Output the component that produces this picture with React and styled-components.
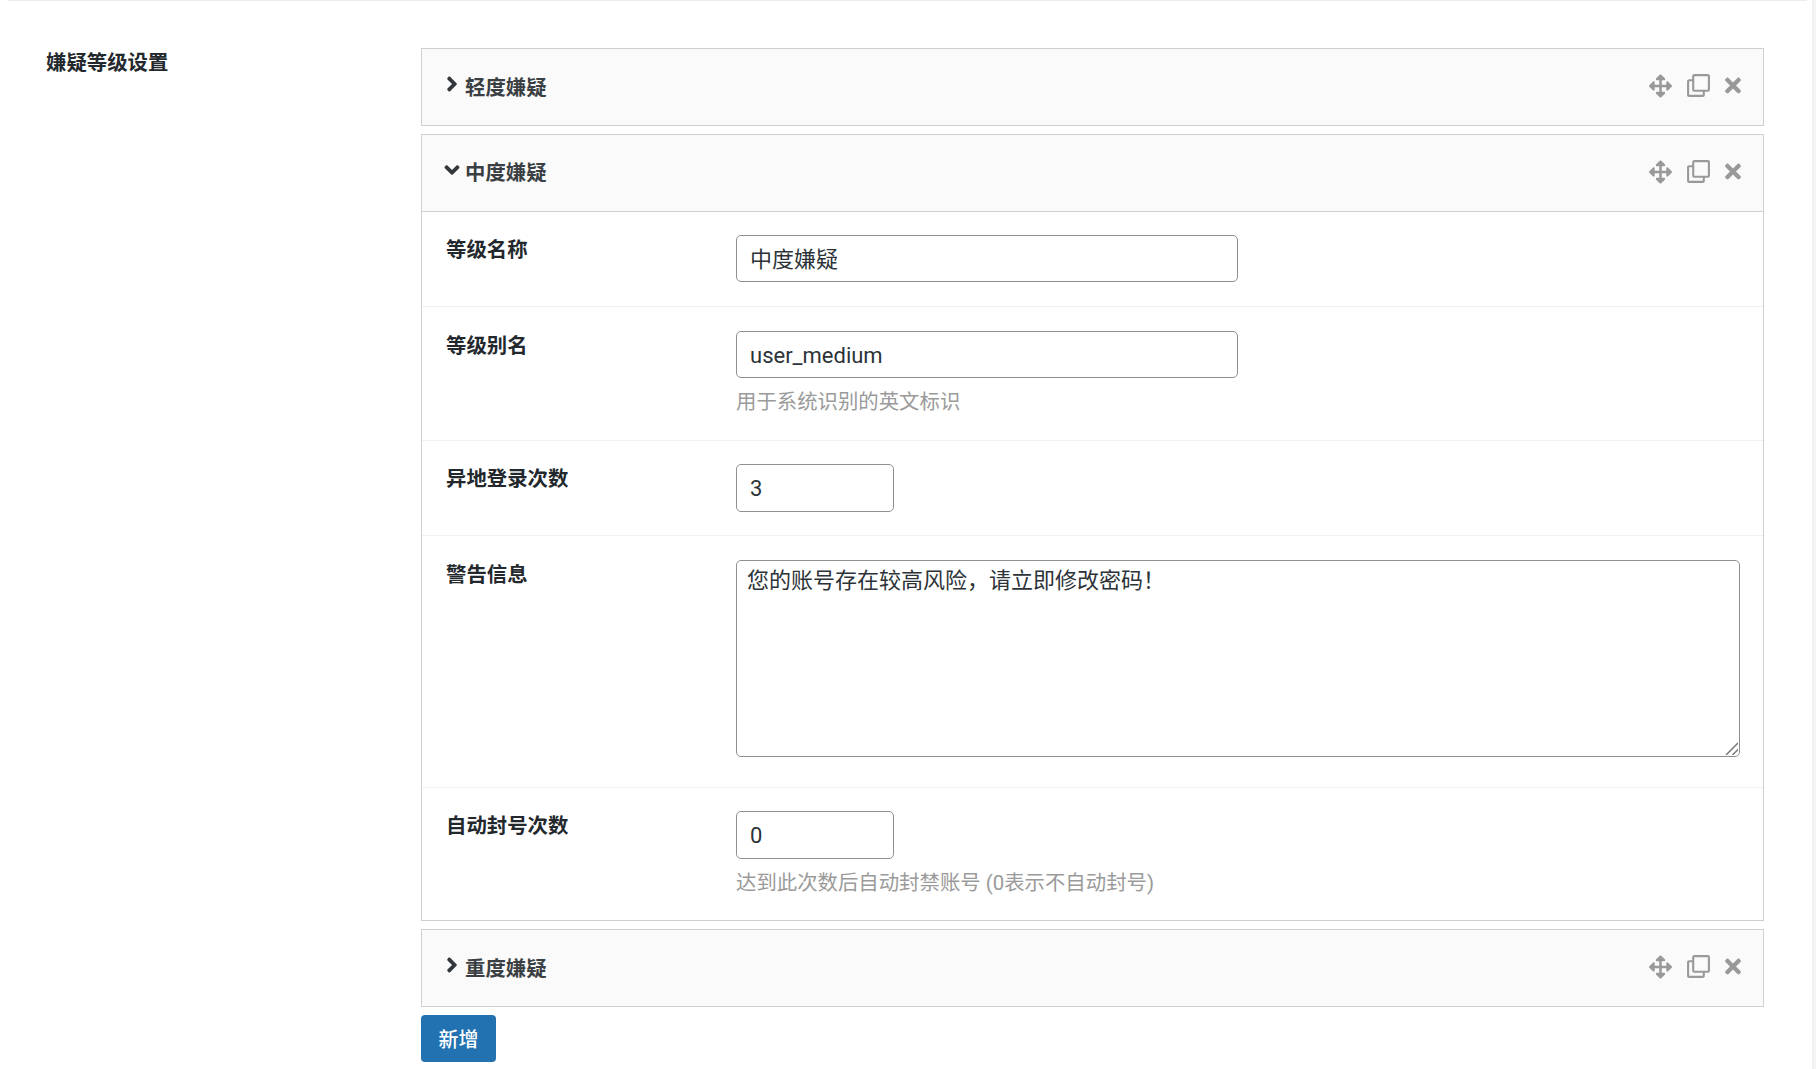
import React from "react";
import styled, { createGlobalStyle } from "styled-components";
import { FaArrowsAlt, FaTimes, FaAngleRight, FaAngleDown } from "react-icons/fa";

const Global = createGlobalStyle`
  html, body { margin: 0; padding: 0; background: #fff; }
  body { font-family: Roboto, "Noto Sans CJK SC", sans-serif; color: #23282d; }
  * { box-sizing: border-box; }
`;

const Shell = styled.div`
  display: flex;
  width: 1816px;
  height: 1069px;
  overflow: hidden;
`;
const Main = styled.main`
  width: 1812px;
  display: flex;
  flex-direction: column;
`;
const Gutter = styled.div`
  width: 4px;
  background: linear-gradient(90deg, #efefef, #f6f6f6);
`;
const TopLine = styled.div`
  height: 1px;
  margin: 0 5px 0 8px;
  background: #ececec;
`;
const Section = styled.section`
  display: flex;
  padding: 47px 0 0 46px;
`;
const SectionTitle = styled.h2`
  width: 375px;
  margin: 0;
  padding-top: 1px;
  font-size: 20.4px;
  line-height: 28px;
  font-weight: 700;
  color: #23282d;
`;
const Stack = styled.div`
  width: 1343px;
  display: flex;
  flex-direction: column;
  gap: 8px;
`;
const Panel = styled.div`
  border: 1px solid #cfcfcf;
  background: #fff;
`;
const PanelHead = styled.div`
  height: ${(p) => (p.$open ? "77px" : "76px")};
  padding: 0 21px 0 24px;
  display: flex;
  align-items: center;
  background: #fafafa;
  border-bottom: ${(p) => (p.$open ? "1px solid #cfcfcf" : "none")};
`;
const Caret = styled.span`
  width: 25px;
  height: 24px;
  margin-top: -6px;
  margin-left: -6px;
  display: flex;
  align-items: center;
  justify-content: flex-start;
  color: #32373c;
  font-size: 24px;
`;
const PanelTitle = styled.span`
  flex: 1;
  margin-top: ${(p) => (p.$open ? "0" : "2px")};
  font-size: 20.4px;
  line-height: 28px;
  font-weight: 700;
  color: #3a3f44;
`;
const Tools = styled.div`
  display: flex;
  align-items: center;
  color: #999;
  margin-top: -3px;
`;
const ToolSlot = styled.span`
  display: flex;
  align-items: center;
  justify-content: center;
  width: ${(p) => p.$w}px;
  margin-left: ${(p) => p.$gap}px;
  font-size: ${(p) => p.$size}px;
`;
const Row = styled.div`
  display: flex;
  padding: ${(p) => p.$top}px 20px ${(p) => p.$bottom}px 24px;
  border-bottom: ${(p) => (p.$last ? "none" : "1px solid #f0f0f0")};
`;
const RowLabel = styled.label`
  width: 290px;
  flex: none;
  padding-top: 1px;
  font-size: 20.4px;
  line-height: 28px;
  font-weight: 700;
  color: #23282d;
`;
const RowBody = styled.div`
  flex: 1;
  min-width: 0;
  display: flex;
  flex-direction: column;
  align-items: flex-start;
`;
const Input = styled.input`
  display: block;
  width: ${(p) => p.$w}px;
  height: ${(p) => p.$h}px;
  padding: ${(p) => (p.$latin ? "1px 13px 0" : "0 13px 3px")};
  border: 1px solid #8c8f94;
  border-radius: 5px;
  background: #fff;
  color: #2c3338;
  font-family: Roboto, "Noto Sans CJK SC", sans-serif;
  font-size: 22px;
  outline: none;
`;
const AreaWrap = styled.div`
  position: relative;
  width: 1004px;
  height: 197px;
`;
const TextArea = styled.textarea`
  display: block;
  width: 100%;
  height: 100%;
  padding: 2px 10px;
  border: 1px solid #8c8f94;
  border-radius: 5px;
  background: #fff;
  color: #2c3338;
  font-family: "Noto Sans CJK SC", Roboto, sans-serif;
  font-size: 22px;
  line-height: 30px;
  resize: none;
  outline: none;
`;
const ResizeGrip = styled.svg`
  position: absolute;
  right: 2px;
  bottom: 2px;
  width: 13px;
  height: 13px;
  stroke: #777;
  stroke-width: 1.5;
`;
const Hint = styled.p`
  margin: 10px 0 0;
  font-size: 20.4px;
  line-height: 28px;
  color: #9a9a9a;
`;
const AddButton = styled.button`
  display: block;
  width: 75px;
  height: 47px;
  border: none;
  border-radius: 4px;
  background: #2271b1;
  color: #fff;
  font-family: "Noto Sans CJK SC", sans-serif;
  font-size: 20px;
  font-weight: 500;
`;

const CopyIcon = () => (
  <svg width="23" height="23" viewBox="0 0 23 23" fill="none" stroke="currentColor" strokeWidth="2.1">
    <rect x="6.2" y="1.1" width="15.7" height="15.7" rx="1" />
    <path d="M6.2 6.2H2.1a1 1 0 0 0-1 1v13.7a1 1 0 0 0 1 1h13.7a1 1 0 0 0 1-1v-4.1" />
  </svg>
);

const Head = ({ title, open }) => (
  <PanelHead $open={open}>
    <Caret>{open ? <FaAngleDown /> : <FaAngleRight />}</Caret>
    <PanelTitle $open={open}>{title}</PanelTitle>
    <Tools>
      <ToolSlot $w={23} $gap={0} $size={24}><FaArrowsAlt /></ToolSlot>
      <ToolSlot $w={23} $gap={15} $size={23}><CopyIcon /></ToolSlot>
      <ToolSlot $w={18} $gap={14} $size={23}><FaTimes /></ToolSlot>
    </Tools>
  </PanelHead>
);

export default function App() {
  return (
    <Shell>
      <Global />
      <Main>
        <TopLine />
        <Section>
          <SectionTitle>嫌疑等级设置</SectionTitle>
          <Stack>
            <Panel>
              <Head title="轻度嫌疑" />
            </Panel>
            <Panel>
              <Head title="中度嫌疑" open />
              <Row $top={23} $bottom={24}>
                <RowLabel>等级名称</RowLabel>
                <RowBody>
                  <Input $w={502} $h={47} readOnly value="中度嫌疑" />
                </RowBody>
              </Row>
              <Row $top={24} $bottom={24}>
                <RowLabel>等级别名</RowLabel>
                <RowBody>
                  <Input $w={502} $h={47} $latin readOnly value="user_medium" />
                  <Hint>用于系统识别的英文标识</Hint>
                </RowBody>
              </Row>
              <Row $top={23} $bottom={23}>
                <RowLabel>异地登录次数</RowLabel>
                <RowBody>
                  <Input $w={158} $h={48} $latin readOnly value="3" />
                </RowBody>
              </Row>
              <Row $top={24} $bottom={30}>
                <RowLabel>警告信息</RowLabel>
                <RowBody>
                  <AreaWrap>
                    <TextArea readOnly value="您的账号存在较高风险，请立即修改密码！" />
                    <ResizeGrip viewBox="0 0 13 13">
                      <path d="M1 13 13 1M7.5 13 13 7.5" />
                    </ResizeGrip>
                  </AreaWrap>
                </RowBody>
              </Row>
              <Row $top={23} $bottom={23} $last>
                <RowLabel>自动封号次数</RowLabel>
                <RowBody>
                  <Input $w={158} $h={48} $latin readOnly value="0" />
                  <Hint>达到此次数后自动封禁账号 (0表示不自动封号)</Hint>
                </RowBody>
              </Row>
            </Panel>
            <Panel>
              <Head title="重度嫌疑" />
            </Panel>
            <div>
              <AddButton>新增</AddButton>
            </div>
          </Stack>
        </Section>
      </Main>
      <Gutter />
    </Shell>
  );
}
